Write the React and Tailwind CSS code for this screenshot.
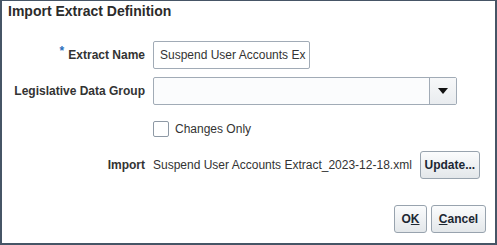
const Btn = ({ children, className = "" }) => (
  <button
    className={`h-[28px] rounded-[3px] border border-[#98a3ae] bg-gradient-to-b from-[#fbfcfd] to-[#e3e7ea] text-[12px] font-bold text-[#1c2733] ${className}`}
  >
    {children}
  </button>
);

export default function App() {
  return (
    <div
      className="w-[497px] h-[245px] bg-white border-2 border-t border-[#465566] flex flex-col text-[#333333]"
      style={{ fontFamily: '"Liberation Sans", Arial, sans-serif' }}
    >
      <div className="pl-[6px] pt-[2px] h-[16px] leading-[16px] text-[14px] font-bold text-[#2b2b2b]">
        Import Extract Definition
      </div>

      <div className="mt-[24px] grid grid-cols-[143px_1fr] gap-x-[8px] text-[12px]">
        {/* Extract Name */}
        <div className="h-[28px] flex items-center justify-end font-bold">
          <span className="text-[#2a6ebb] text-[12px] -mt-[8px] mr-[4px] font-bold">*</span>
          Extract Name
        </div>
        <div className="h-[28px]">
          <div className="w-[157px] h-[28px] border border-[#a1abb6] rounded-[2px] bg-white pl-[6px] flex items-center overflow-hidden whitespace-nowrap">
            Suspend User Accounts Ex
          </div>
        </div>

        {/* Legislative Data Group */}
        <div className="mt-[8px] h-[28px] flex items-center justify-end font-bold">
          Legislative Data Group
        </div>
        <div className="mt-[8px] h-[28px]">
          <div className="w-[304px] h-[28px] border border-[#a1abb6] rounded-[2px] bg-[#fbfcfd] flex">
            <div className="flex-1" />
            <div className="w-[27px] border-l border-[#a1abb6] bg-gradient-to-b from-[#f7f8f9] to-[#e9ecef] flex items-center justify-center">
              <svg width="10" height="6" viewBox="0 0 10 6">
                <path d="M0 0 H10 L5 6 Z" fill="#111" />
              </svg>
            </div>
          </div>
        </div>

        {/* Changes Only */}
        <div className="mt-[16px] h-[16px]" />
        <div className="mt-[16px] h-[16px] flex items-center">
          <div className="w-[16px] h-[16px] border border-[#8e99a5] rounded-[2px] bg-white" />
          <span className="ml-[6px]">Changes Only</span>
        </div>

        {/* Import */}
        <div className="mt-[14px] h-[28px] flex items-center justify-end font-bold">
          Import
        </div>
        <div className="mt-[14px] h-[28px] flex items-center gap-[8px] whitespace-nowrap">
          <span>Suspend User Accounts Extract_2023-12-18.xml</span>
          <Btn className="w-[60px]">Update...</Btn>
        </div>
      </div>

      <div className="mt-[26px] pr-[9px] flex justify-end gap-[4px]">
        <Btn className="w-[33px]">
          O<span className="underline">K</span>
        </Btn>
        <Btn className="w-[55px]">
          <span className="underline">C</span>ancel
        </Btn>
      </div>
    </div>
  );
}
